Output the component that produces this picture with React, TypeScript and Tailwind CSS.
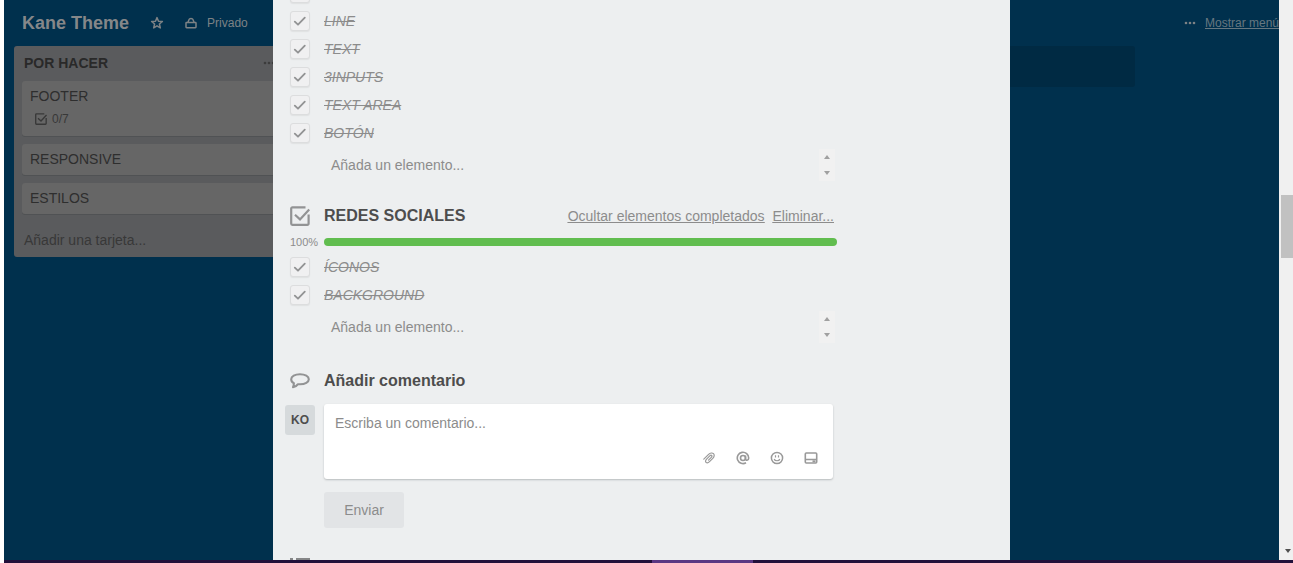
import React from "react";

function CheckMark() {
  return (
    <svg viewBox="0 0 20 20" className="pointer-events-none absolute inset-0 h-5 w-5" fill="none" stroke="#929394" strokeWidth="1.8" strokeLinecap="round" strokeLinejoin="round" aria-hidden="true">
      <path d="M4.8 10.6 8 13.7 14.8 6.6" />
    </svg>
  );
}

function ChecklistIcon({ className }: { className: string }) {
  return (
    <svg viewBox="0 0 20 20" className={className} fill="none" stroke="currentColor" strokeWidth="2.2" aria-hidden="true">
      <path d="M15.5 1.4H2.4A1.2 1.2 0 0 0 1.2 2.6v15a1.2 1.2 0 0 0 1.2 1.2h15a1.2 1.2 0 0 0 1.2-1.2V8.5" />
      <path d="m5 8.8 5 4.6L19.2 3.400" />
    </svg>
  );
}

function Dots({ className }: { className: string }) {
  return (
    <svg viewBox="0 0 12 4" className={className} fill="currentColor" aria-hidden="true">
      <circle cx="2" cy="2" r="1.3" />
      <circle cx="6" cy="2" r="1.3" />
      <circle cx="10" cy="2" r="1.3" />
    </svg>
  );
}

function CheckItem({ label, hiddenLabel }: { label?: string; hiddenLabel?: string }) {
  return (
    <li>
      <label className="flex h-7 items-center">
        <span className="relative mr-[14px] h-5 w-5 shrink-0">
          <input
            type="checkbox"
            defaultChecked
            aria-label={hiddenLabel}
            className="block h-5 w-5 appearance-none rounded-[3px] border border-[#dcddde] bg-[#f0f0f1] shadow-[0_1px_1px_#dfe1e2]"
          />
          <CheckMark />
        </span>
        {label && <span className="text-sm leading-5 text-[#8c8c8c] italic line-through">{label}</span>}
      </label>
    </li>
  );
}

function AddItem({ name }: { name: string }) {
  return (
    <div className="mt-[2px] mr-[2px] ml-[34px] flex h-8">
      <textarea
        aria-label={name}
        placeholder="Añada un elemento..."
        rows={1}
        className="block h-8 min-w-0 flex-1 resize-none overflow-hidden bg-transparent px-[7px] py-[6px] text-sm leading-5 text-[#4d4d4d] outline-none placeholder:text-[#8c8c8c] placeholder:opacity-100"
      />
      <div className="flex w-4 flex-col items-center justify-between bg-[#f1f1f1] py-[6px]" aria-hidden="true">
        <svg viewBox="0 0 6 4" className="h-1 w-[6px]" fill="#a0a0a0"><path d="M0 4 3 0l3 4z" /></svg>
        <svg viewBox="0 0 6 4" className="h-1 w-[6px]" fill="#a0a0a0"><path d="M0 0h6L3 4z" /></svg>
      </div>
    </div>
  );
}

function Card({ title, children }: { title: string; children?: React.ReactNode }) {
  return (
    <article className="rounded-[3px] bg-[#666666] px-2 pt-[5px] pb-[6px] shadow-[0_1px_0_#505254]">
      <h3 className="text-sm leading-5 text-[#2e2e2e]">{title}</h3>
      {children}
    </article>
  );
}

function Board() {
  return (
    <div className="min-w-0 flex-1 bg-[#00304d]">
      <header className="flex h-[46px] items-center justify-between pb-[1px] pl-[18px] text-xs text-[#7d8285]">
        <div className="flex items-center">
          <h1 className="text-lg leading-6 font-bold text-[#858789]">Kane Theme</h1>
          <button type="button" aria-label="Destacar" className="ml-[21px]">
            <svg viewBox="0 0 14 14" className="h-[14px] w-[14px]" fill="none" stroke="currentColor" strokeWidth="1.5" strokeLinejoin="round">
              <path d="m7 1.6 1.5 3.6 3.9.3-3 2.5.9 3.9L7 9.8l-3.3 2.1.9-3.9-3-2.5 3.9-.3z" />
            </svg>
          </button>
          <button type="button" className="ml-[21px] flex items-center gap-[10px]">
            <svg viewBox="0 0 12 12" className="h-3 w-3" fill="none" stroke="currentColor" strokeWidth="1.5" strokeLinejoin="round">
              <rect x="1" y="5.5" width="10" height="5.2" rx="0.6" />
              <path d="M3 5.3 4 2.600Q4.400 1.400 6 1.400T8 2.600L9 5.300" />
            </svg>
            Privado
          </button>
        </div>
        <div className="flex shrink-0 items-center gap-[9px]">
          <Dots className="h-1 w-3" />
          <a href="#menu" className="text-[#667780] underline">Mostrar menú</a>
        </div>
      </header>
      <div className="grid grid-cols-[repeat(4,272px)] items-start gap-[11px] pl-[10px]">
        <section className="rounded-[3px] bg-[#5a5b5d] px-2 pb-[6px]">
          <div className="flex h-[35px] items-center justify-between pr-[3px] pb-[2px] pl-[2px]">
            <h2 className="text-sm font-bold text-[#292929]">POR HACER</h2>
            <button type="button" aria-label="Acciones de la lista" className="text-[#3c3c3c]">
              <Dots className="h-1 w-3" />
            </button>
          </div>
          <div className="flex flex-col gap-2">
            <Card title="FOOTER">
              <div className="mt-[2px] flex h-[22px] items-center gap-[5px] pl-[5px] text-xs text-[#383838]">
                <ChecklistIcon className="h-3 w-3" />
                0/7
              </div>
            </Card>
            <Card title="RESPONSIVE" />
            <Card title="ESTILOS" />
          </div>
          <a href="#nueva-tarjeta" className="mt-4 block pb-[1px] pl-[2px] text-sm leading-5 text-[#383838]">Añadir una tarjeta...</a>
        </section>
        <div className="col-start-4 h-[41px] rounded-[3px] bg-[#002a43]" />
      </div>
    </div>
  );
}

const toolButton = "flex h-6 w-[34px] items-center justify-center";

function CommentForm() {
  return (
    <section className="mt-[26px]">
      <div className="flex h-6 items-center">
        <svg viewBox="0 0 20 18" className="mr-[14px] h-[18px] w-5 shrink-0" fill="none" stroke="#929394" strokeWidth="2.1" strokeLinejoin="round" aria-hidden="true">
          <path d="M10 2.200C4.900 2.200 1.200 4.300 1.200 7.200c0 1.800 1 3.200 2.700 4.100-.1 1.700-.4 2.900-.9 4 2.600-.4 4-1.600 5-3.100.7.100 1.300.1 2 .1 5.100 0 8.800-2.200 8.800-5.100S15.100 2.200 10 2.200z" />
        </svg>
        <h2 className="text-base leading-6 font-bold text-[#4d4d4d]">Añadir comentario</h2>
      </div>
      <form className="mt-[11px] mr-1 -ml-[5px] flex items-start gap-[9px]" onSubmit={(e) => e.preventDefault()}>
        <div className="mt-[1px] flex h-[30px] w-[30px] shrink-0 items-center justify-center rounded-[3px] bg-[#d6dadc] text-xs font-bold text-[#4d4d4d]">KO</div>
        <div className="min-w-0 flex-1">
          <div className="rounded-[3px] bg-white pb-[9px] shadow-[0_1px_2px_#b8bbbd]">
            <textarea
              aria-label="Comentario"
              placeholder="Escriba un comentario..."
              rows={1}
              className="block h-[42px] w-full resize-none overflow-hidden bg-transparent px-[11px] pt-[9px] text-sm leading-5 text-[#4d4d4d] outline-none placeholder:text-[#8c8c8c] placeholder:opacity-100"
            />
            <div className="flex justify-end pr-[5px] text-[#999999]">
              <button type="button" aria-label="Adjuntar" className={toolButton}>
                <svg viewBox="0 0 12 12" className="h-3 w-3" fill="none" stroke="currentColor" strokeWidth="1.2" strokeLinecap="round">
                  <path d="M.8 7.200 5.600 2.400c1.600-1.600 3.800-1.800 4.900-.7s.8 3.200-.7 4.700L6.500 9.700c-1.200 1.200-2.700 1.400-3.500.6s-.5-2.100.6-3.200l3.200-3.200c.7-.7 1.500-.8 1.900-.4s.3 1.100-.4 1.800L5.500 8.100" />
                </svg>
              </button>
              <button type="button" aria-label="Mencionar" className={toolButton}>
                <svg viewBox="0 0 14 14" className="h-[14px] w-[14px]" fill="none" stroke="currentColor" strokeWidth="1.6">
                  <circle cx="7" cy="7" r="2.500" />
                  <path d="M9.500 4.500v3.200c0 2.200 3.200 2.200 3.200-.7A5.700 5.700 0 1 0 10 11.800" />
                </svg>
              </button>
              <button type="button" aria-label="Emoji" className={toolButton}>
                <svg viewBox="0 0 14 14" className="h-[14px] w-[14px]" fill="none" stroke="currentColor" strokeWidth="1.5">
                  <circle cx="7" cy="7" r="5.600" />
                  <path d="M5.500 4.200v2.400M8.500 4.200v2.400M4.200 8c.6 2.300 5 2.300 5.600 0" strokeWidth="1.200" />
                </svg>
              </button>
              <button type="button" aria-label="Tarjeta" className={toolButton}>
                <svg viewBox="0 0 14 14" className="h-[14px] w-[14px]" fill="none" stroke="currentColor" strokeWidth="1.600">
                  <rect x="1.300" y="2" width="11.400" height="10" rx="1" />
                  <path d="M1.300 8.500h11.400M8.500 10.400h3" />
                </svg>
              </button>
            </div>
          </div>
          <button type="submit" className="mt-[13px] block h-9 w-20 rounded-[3px] bg-[#e2e4e6] text-sm text-[#8c8c8c]">Enviar</button>
        </div>
      </form>
    </section>
  );
}

function CardDialog() {
  return (
    <div role="dialog" aria-label="Tarjeta" className="h-full w-[737px] overflow-hidden bg-[#edeff0] pr-[173px] pl-[17px]">
      <ul className="-mt-[21px]">
        <CheckItem hiddenLabel="Elemento completado" />
        <CheckItem label="LINE" />
        <CheckItem label="TEXT" />
        <CheckItem label="3INPUTS" />
        <CheckItem label="TEXT AREA" />
        <CheckItem label="BOTÓN" />
      </ul>
      <AddItem name="Nuevo elemento" />
      <section>
        <div className="mt-[23px] flex h-6 items-center">
          <ChecklistIcon className="mr-[14px] h-5 w-5 shrink-0 text-[#929394]" />
          <h2 className="flex-1 text-base leading-6 font-bold text-[#4d4d4d]">REDES SOCIALES</h2>
          <div className="flex gap-2 pr-[3px] text-sm leading-5 text-[#8c8c8c] underline">
            <a href="#ocultar">Ocultar elementos completados</a>
            <a href="#eliminar">Eliminar...</a>
          </div>
        </div>
        <div className="mt-[6px] flex h-4 items-center">
          <span className="w-[34px] shrink-0 text-[11px] leading-4 text-[#8c8c8c]">100%</span>
          <div role="progressbar" aria-label="Redes sociales" aria-valuenow={100} className="h-2 flex-1 rounded-full bg-[#61bd4f]" />
        </div>
        <ul className="mt-[3px]">
          <CheckItem label="ÍCONOS" />
          <CheckItem label="BACKGROUND" />
        </ul>
        <AddItem name="Nuevo elemento de redes sociales" />
      </section>
      <CommentForm />
      <svg viewBox="0 0 20 16" className="mt-[30px] h-4 w-5" fill="#858687" aria-hidden="true">
        <path d="M0 0h3v2H0zM6 0h14v2H6zM0 7h3v2H0zM6 7h14v2H6zM0 14h3v2H0zM6 14h14v2H6z" />
      </svg>
    </div>
  );
}

export default function App() {
  return (
    <div className="flex h-screen flex-col overflow-hidden bg-white font-['Liberation_Sans',Arial,sans-serif]">
      <div className="flex min-h-0 flex-1">
        <main className="relative ml-1 flex min-w-0 flex-1 overflow-hidden">
          <Board />
          <div className="absolute inset-0 flex justify-center">
            <CardDialog />
          </div>
        </main>
        <div className="flex w-[14px] shrink-0 flex-col bg-[#f0f0f0] pt-[195px] pb-[7px] pl-[2px]" aria-hidden="true">
          <div className="h-[63px] bg-[#c1c1c1]" />
          <svg viewBox="0 0 6 4" className="mt-auto ml-1 h-1 w-[6px]" fill="#505050"><path d="M0 0h6L3 4z" /></svg>
        </div>
      </div>
      <div className="ml-1 flex h-[3px] shrink-0 justify-center bg-[#21103a]">
        <div className="ml-[107px] w-[101px] bg-[#5a3783]" />
      </div>
    </div>
  );
}
